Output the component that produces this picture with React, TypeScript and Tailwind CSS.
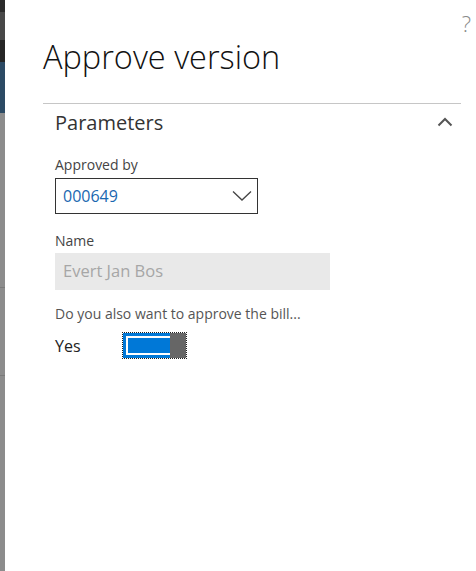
import React from 'react';

const font = { fontFamily: '"Open Sans", "Noto Sans", sans-serif' };

const App: React.FC = () => {
    return (
        <div className="flex w-[476px] h-[571px] bg-white overflow-hidden" style={font}>
            {/* strip of the page behind the panel */}
            <div className="w-[5px] flex flex-col shrink-0">
                <div className="h-[12px] bg-[#2b2b2b]" />
                <div className="h-[28px] bg-[#484848]" />
                <div className="h-[22px] bg-[#262626]" />
                <div className="h-[51px] bg-[#2c4a64]" />
                <div className="h-[175px] bg-[#8c8c8c] border-b border-[#7a7a7a]" />
                <div className="h-[88px] bg-[#8c8c8c] border-b border-[#7a7a7a]" />
                <div className="flex-1 bg-[#8c8c8c]" />
            </div>

            <div className="flex-1 relative pl-[38px] pr-[15px]">
                <span className="absolute right-[5px] top-[12px] text-[22px] font-light text-[#8a8a8a] leading-none">?</span>

                <h1 className="pt-[33px] text-[32.5px] font-light text-[#111] leading-[48px]">Approve version</h1>

                <div className="mt-[22px] border-t border-[#c6c6c6]">
                    <div className="flex items-center justify-between pl-[12px] pr-[8px] pt-[4px]">
                        <span className="text-[20px] text-[#333] leading-[30px]">Parameters</span>
                        <svg width="16" height="10" viewBox="0 0 16 10" className="mb-[2px]">
                            <path d="M1.5 8.5 L8 2 L14.5 8.5" fill="none" stroke="#555" strokeWidth="2" />
                        </svg>
                    </div>

                    <div className="pl-[12px] pt-[18px] flex flex-col">
                        <label className="text-[14px] text-[#444] leading-[18px]">Approved by</label>
                        <div className="mt-[4px] w-[203px] h-[36px] border border-[#333] flex items-center justify-between pl-[7px] pr-[5px]">
                            <span className="text-[16px] text-[#1a67b0] leading-none">000649</span>
                            <svg width="20" height="12" viewBox="0 0 20 12">
                                <path d="M1 1.5 L10 10 L19 1.5" fill="none" stroke="#444" strokeWidth="1.3" />
                            </svg>
                        </div>

                        <label className="mt-[18px] text-[14px] text-[#444] leading-[18px]">Name</label>
                        <div className="mt-[3px] w-[275px] h-[37px] bg-[#e9e9e9] flex items-center pl-[8px]">
                            <span className="text-[16.5px] text-[#a6a6a6] leading-none">Evert Jan Bos</span>
                        </div>

                        <p className="mt-[15px] text-[14px] text-[#555] leading-[18px]">Do you also want to approve the bill...</p>

                        <div className="mt-[9px] flex items-center">
                            <span className="w-[67px] text-[16px] text-[#222] leading-none">Yes</span>
                            <div className="w-[65px] h-[27px] border border-dotted border-[#222] flex">
                                <div className="flex-1 bg-[#0078d7] p-[3px] pr-0">
                                    <div className="h-full border-2 border-white border-r-0" />
                                </div>
                                <div className="w-[16px] bg-[#666]" />
                            </div>
                        </div>
                    </div>
                </div>
            </div>
        </div>
    );
};

export default App;
